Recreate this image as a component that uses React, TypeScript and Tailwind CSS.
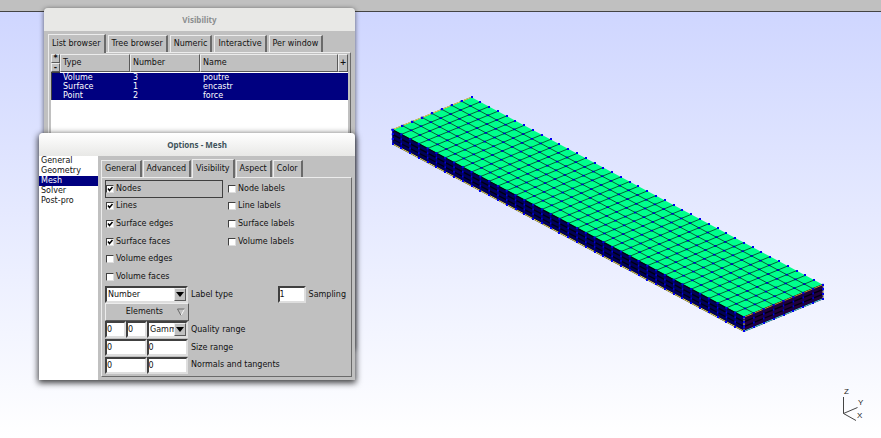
import { useState } from 'react';
import type { ReactNode } from 'react';
import clsx from 'clsx';

type Point = [number, number];

const RAISED = 'border border-t-[#ececec] border-l-[#ececec] border-r-[#5a5a5a] border-b-[#5a5a5a]';
const SUNKEN = 'border-2 border-t-[#404040] border-l-[#404040] border-r-[#dedede] border-b-[#dedede]';

const ENTITIES = [
    { type: 'Volume', number: 3, name: 'poutre' },
    { type: 'Surface', number: 1, name: 'encastr' },
    { type: 'Point', number: 2, name: 'force' },
];

const CATEGORIES = ['General', 'Geometry', 'Mesh', 'Solver', 'Post-pro'];

const CHECK_ROWS = [
    ['Nodes', 'Node labels'],
    ['Lines', 'Line labels'],
    ['Surface edges', 'Surface labels'],
    ['Surface faces', 'Volume labels'],
    ['Volume edges'],
    ['Volume faces'],
];

const CHECKED = ['Nodes', 'Lines', 'Surface edges', 'Surface faces'];

/* Mesh subdivisions: length, width, thickness */
const NX = 40;
const NY = 8;
const NZ = 3;

function project(i: number, j: number, k: number): Point {
    return [
        12.5 + (i * 351.5) / NX + (j * 79) / NY,
        44.7 + (i * 187.5) / NX - (j * 32.5) / NY + (k * 14) / NZ,
    ];
}

function range(n: number) {
    return Array.from({ length: n + 1 }, (_, i) => i);
}

function segment(a: Point, b: Point) {
    return `M${a[0]} ${a[1]}L${b[0]} ${b[1]}`;
}

function outline(...points: Point[]) {
    return points.map((p) => p.join(',')).join(' ');
}

function BeamMesh() {
    const topLines = [
        ...range(NX).map((i) => segment(project(i, 0, 0), project(i, NY, 0))),
        ...range(NY - 1).map((j) => segment(project(0, j, 0), project(NX, j, 0))),
    ].join('');
    const layerLines = range(NZ)
        .map((k) => segment(project(0, 0, k), project(NX, 0, k)) + segment(project(NX, 0, k), project(NX, NY, k)))
        .join('');
    const sideLines = range(NX).map((i) => segment(project(i, 0, 0), project(i, 0, NZ))).join('');
    const endLines = range(NY).map((j) => segment(project(NX, j, 0), project(NX, j, NZ))).join('');
    const innerNodes = range(NX).flatMap((i) => range(NY - 1).map((j) => project(i, j, 0)));
    const sideNodes = [
        ...range(NX).flatMap((i) => range(NZ - 1).map((k) => project(i, 0, k))),
        ...range(NY).flatMap((j) => range(NZ - 1).map((k) => project(NX, j, k))),
    ];
    const rimNodes = [
        ...range(NX).map((i) => project(i, NY, 0)),
        ...range(NX).map((i) => project(i, 0, NZ)),
        ...range(NY).map((j) => project(0, j, 0)),
        ...range(NY).map((j) => project(NX, j, NZ)),
        ...range(NZ).map((k) => project(0, 0, k)),
        ...range(NZ).map((k) => project(NX, 0, k)),
        ...range(NZ).map((k) => project(NX, NY, k)),
    ];

    return (
        <svg
            viewBox="0 0 460 260"
            width="460"
            height="260"
            className="absolute left-[380px] top-[85px]"
            role="img"
            aria-label="Beam mesh"
        >
            <polygon
                points={outline(project(0, 0, 0), project(0, NY, 0), project(NX, NY, 0), project(NX, 0, 0))}
                fill="#00ff8c"
            />
            <polygon
                points={outline(project(0, 0, 0), project(NX, 0, 0), project(NX, 0, NZ), project(0, 0, NZ))}
                fill="#000058"
            />
            <polygon
                points={outline(project(NX, 0, 0), project(NX, NY, 0), project(NX, NY, NZ), project(NX, 0, NZ))}
                fill="#22003c"
            />
            <path d={topLines} stroke="#003a20" strokeWidth="0.8" />
            <path d={layerLines} stroke="#000010" strokeWidth="1.3" />
            <path d={sideLines} stroke="#000098" strokeWidth="0.8" />
            <path d={endLines} stroke="#000080" strokeWidth="0.8" />
            <path
                d={segment(project(0, 0, 0), project(0, NY, 0)) + segment(project(0, 0, NZ), project(NX, 0, NZ))}
                stroke="#e8d850"
                strokeWidth="1"
            />
            <path d={segment(project(NX, 0, 0), project(NX, NY, 0))} stroke="#c09030" strokeWidth="1" />
            <path d={segment(project(NX, 0, NZ), project(NX, NY, NZ))} stroke="#50c8e8" strokeWidth="1" />
            <path
                d={segment(project(NX, 0, 0), project(NX, 0, NZ)) + segment(project(NX, NY, 0), project(NX, NY, NZ))}
                stroke="#d8e060"
                strokeWidth="1"
                strokeDasharray="2 1"
            />
            <g fill="#0000c8">
                {innerNodes.map(([x, y], n) => (
                    <rect key={n} x={x - 1.2} y={y - 0.8} width="2.4" height="1.6" />
                ))}
            </g>
            <g fill="#0000d8">
                {sideNodes.map(([x, y], n) => (
                    <rect key={n} x={x - 0.8} y={y - 0.9} width="1.6" height="1.8" />
                ))}
            </g>
            <g fill="#0000f0" shapeRendering="crispEdges">
                {rimNodes.map(([x, y], n) => (
                    <rect key={n} x={Math.round(x) - 1} y={Math.round(y) - 1} width="2" height="2" />
                ))}
            </g>
        </svg>
    );
}

function Axes() {
    return (
        <svg
            viewBox="0 0 30 40"
            width="30"
            height="40"
            className="absolute bottom-[11px] right-[13px]"
            role="img"
            aria-label="Axes"
        >
            <path d="M5.500 10V26.500L19.500 20.500M5.500 26.500L18 33.500" fill="none" stroke="#444" strokeWidth="1" />
            <g fill="#222" fontFamily="Liberation Sans, sans-serif" fontSize="8">
                <text x="6" y="7">Z</text>
                <text x="20" y="18">Y</text>
                <text x="19" y="31">X</text>
            </g>
        </svg>
    );
}

type TabsProps = {
    tabs: string[];
    initial: string;
    className?: string;
};

function Tabs({ tabs, initial, className }: TabsProps) {
    const [active, setActive] = useState(initial);

    return (
        <div role="tablist" className={clsx('flex h-[18px] items-end', className)}>
            {tabs.map((tab) => (
                <button
                    key={tab}
                    type="button"
                    role="tab"
                    aria-selected={tab === active}
                    onClick={() => setActive(tab)}
                    className={clsx(
                        'whitespace-nowrap border-l border-r-2 border-t border-l-[#ececec] border-r-[#6a6a6a] border-t-[#ececec] px-[3px]',
                        tab === active ? 'relative z-10 -mb-px h-[19px] bg-[#c0c0c0]' : 'h-[17px]',
                    )}
                >
                    {tab}
                </button>
            ))}
        </div>
    );
}

function VisibilityWindow() {
    return (
        <section className="absolute left-[44px] top-[8px] flex h-[341px] w-[311px] flex-col rounded-t bg-[#c0c0c0] shadow-[0_1px_5px_rgba(0,0,0,0.6)]">
            <h2 className="flex h-[23px] shrink-0 items-center justify-center rounded-t bg-[#e8e8e6] font-['Noto_Sans',sans-serif] text-[8px] font-bold text-[#8b8e8f]">
                Visibility
            </h2>
            <div className="flex flex-1 flex-col px-1 pb-1 pt-[3px]">
                <Tabs
                    tabs={['List browser', 'Tree browser', 'Numeric', 'Interactive', 'Per window']}
                    initial="List browser"
                    className="gap-[2px]"
                />
                <div className="flex-1 border border-b-[#6a6a6a] border-l-[#ececec] border-r-[#6a6a6a] border-t-[#ececec] px-[2px] py-px">
                    <div className="h-full bg-white">
                        <table className="w-full table-fixed border-separate border-spacing-0 text-left">
                            <colgroup>
                                <col className="w-[9px]" />
                                <col className="w-[70px]" />
                                <col className="w-[70px]" />
                                <col />
                                <col className="w-[10px]" />
                            </colgroup>
                            <thead className="bg-[#c0c0c0]">
                                <tr className="h-[18px]">
                                    <th className="p-0">
                                        <button type="button" className={`block h-[9px] w-full text-center text-[8px] leading-[8px] ${RAISED}`}>
                                            *
                                        </button>
                                        <button type="button" className={`block h-[9px] w-full text-center text-[8px] leading-[6px] ${RAISED}`}>
                                            -
                                        </button>
                                    </th>
                                    <th className={`px-[2px] py-0 font-normal ${RAISED}`}>Type</th>
                                    <th className={`px-[2px] py-0 font-normal ${RAISED}`}>Number</th>
                                    <th className={`px-[2px] py-0 font-normal ${RAISED}`}>Name</th>
                                    <th className="p-0">
                                        <button type="button" className={`block h-[18px] w-full ${RAISED}`}>
                                            +
                                        </button>
                                    </th>
                                </tr>
                            </thead>
                            <tbody className="bg-[#000080] text-[8px] leading-[9px] text-white before:block before:h-px before:bg-[#404040]">
                                {ENTITIES.map((entity) => (
                                    <tr key={entity.name}>
                                        <td className="border-l border-[#404040] p-0" />
                                        <td className="px-[3px] py-0">{entity.type}</td>
                                        <td className="px-[3px] py-0">{entity.number}</td>
                                        <td className="px-[3px] py-0">{entity.name}</td>
                                        <td className="p-0" />
                                    </tr>
                                ))}
                            </tbody>
                        </table>
                    </div>
                </div>
            </div>
        </section>
    );
}

function CheckOption({ label }: { label: string }) {
    return (
        <label className="flex items-center gap-[2px] whitespace-nowrap">
            <span className="relative flex size-[8px]">
                <input
                    type="checkbox"
                    defaultChecked={CHECKED.includes(label)}
                    className="peer size-[8px] appearance-none border border-b-[#dedede] border-l-[#404040] border-r-[#dedede] border-t-[#404040] bg-white"
                />
                <svg
                    viewBox="0 0 8 8"
                    className="pointer-events-none absolute inset-0 hidden size-[8px] peer-checked:block"
                    fill="none"
                    stroke="#000"
                    strokeWidth="1.500"
                >
                    <path d="M2 3.500L3.500 5.500L6.500 2" />
                </svg>
            </span>
            {label}
        </label>
    );
}

type DropDownProps = {
    label: string;
    options: string[];
};

function DropDown({ label, options }: DropDownProps) {
    return (
        <div className={`relative h-[17px] w-full bg-white ${SUNKEN}`}>
            <select
                aria-label={label}
                className="block h-full w-full appearance-none overflow-hidden whitespace-nowrap bg-transparent pl-px pr-[11px] outline-none"
            >
                {options.map((option) => (
                    <option key={option}>{option}</option>
                ))}
            </select>
            <span className={`pointer-events-none absolute inset-y-0 right-0 flex w-[12px] items-center justify-center bg-[#c0c0c0] ${RAISED}`}>
                <svg viewBox="0 0 8 5" width="8" height="5">
                    <path d="M0 0H8L4 5Z" fill="#000" />
                </svg>
            </span>
        </div>
    );
}

function NumberBox({ label, value }: { label: string; value: string }) {
    return (
        <input
            type="text"
            aria-label={label}
            defaultValue={value}
            className={`h-[17px] w-full min-w-0 bg-white ${SUNKEN}`}
        />
    );
}

function FieldRow({ label, children }: { label: string; children: ReactNode }) {
    return (
        <div className="flex items-center gap-[3px]">
            <div className="flex w-[83px]">{children}</div>
            <span>{label}</span>
        </div>
    );
}

function OptionsWindow() {
    const [category, setCategory] = useState('Mesh');

    return (
        <section className="absolute left-[39px] top-[133px] flex h-[247px] w-[316px] flex-col rounded-t bg-[#c0c0c0] shadow-[0_2px_6px_1px_rgba(0,0,0,0.75)]">
            <h2 className="flex h-[23px] shrink-0 items-center justify-center rounded-t bg-linear-to-b from-white to-[#e8e8e6] font-['Noto_Sans',sans-serif] text-[8px] font-bold text-[#40535b]">
                Options - Mesh
            </h2>
            <div className="flex flex-1">
                <nav className="flex w-[59px] flex-col bg-white">
                    {CATEGORIES.map((name) => (
                        <button
                            key={name}
                            type="button"
                            onClick={() => setCategory(name)}
                            className={clsx(
                                'h-[10px] px-[2px] text-left leading-[10px]',
                                name === category && 'bg-[#000080] text-white',
                            )}
                        >
                            {name}
                        </button>
                    ))}
                </nav>
                <div className="flex flex-1 flex-col p-[3px]">
                    <Tabs
                        tabs={['General', 'Advanced', 'Visibility', 'Aspect', 'Color']}
                        initial="Visibility"
                        className="gap-px"
                    />
                    <div className="grid flex-1 auto-rows-fr border border-b-[#6a6a6a] border-l-[#ececec] border-r-[#6a6a6a] border-t-[#ececec] px-[3px] py-[2px]">
                        {CHECK_ROWS.map(([left, right]) => (
                            <div key={left} className="flex gap-[5px]">
                                <div
                                    className={clsx(
                                        'flex w-[118px] border',
                                        left === 'Nodes' ? 'border-[#404040]' : 'border-transparent',
                                    )}
                                >
                                    <CheckOption label={left} />
                                </div>
                                {right && <CheckOption label={right} />}
                            </div>
                        ))}
                        <div className="flex items-center justify-between">
                            <FieldRow label="Label type">
                                <DropDown label="Label type" options={['Number', 'Elementary entity', 'Physical group']} />
                            </FieldRow>
                            <label className="flex items-center gap-[3px] pr-[2px]">
                                <input type="text" defaultValue="1" className={`h-[17px] w-[28px] bg-white ${SUNKEN}`} />
                                Sampling
                            </label>
                        </div>
                        <button type="button" className={`flex w-[84px] items-center justify-end gap-[14px] pr-[3px] ${RAISED}`}>
                            Elements
                            <svg viewBox="0 0 8 8" width="8" height="8" fill="none" className="shrink-0">
                                <path d="M7.500 1L4 7.500" stroke="#f4f4f4" />
                                <path d="M4 7.500L0.500 1H7.500" stroke="#6a6a6a" />
                            </svg>
                        </button>
                        <FieldRow label="Quality range">
                            <div className="flex w-[42px]">
                                <NumberBox label="Minimum quality" value="0" />
                                <NumberBox label="Maximum quality" value="0" />
                            </div>
                            <div className="flex w-[41px]">
                                <DropDown label="Quality measure" options={['Gamma', 'Eta', 'Rho']} />
                            </div>
                        </FieldRow>
                        <FieldRow label="Size range">
                            <NumberBox label="Minimum size" value="0" />
                            <NumberBox label="Maximum size" value="0" />
                        </FieldRow>
                        <FieldRow label="Normals and tangents">
                            <NumberBox label="Normals" value="0" />
                            <NumberBox label="Tangents" value="0" />
                        </FieldRow>
                    </div>
                </div>
            </div>
        </section>
    );
}

export default function App() {
    return (
        <div className="relative flex min-h-screen w-full flex-col overflow-hidden font-['DejaVu_Sans',sans-serif] text-[8px] leading-[12px] text-[#111]">
            <header className="h-[12px] border-b border-[#444] bg-[#c0c0c0]" />
            <main className="flex-1 bg-linear-to-b from-[#cfd6ff] to-white">
                <BeamMesh />
                <Axes />
                <VisibilityWindow />
                <OptionsWindow />
            </main>
        </div>
    );
}
